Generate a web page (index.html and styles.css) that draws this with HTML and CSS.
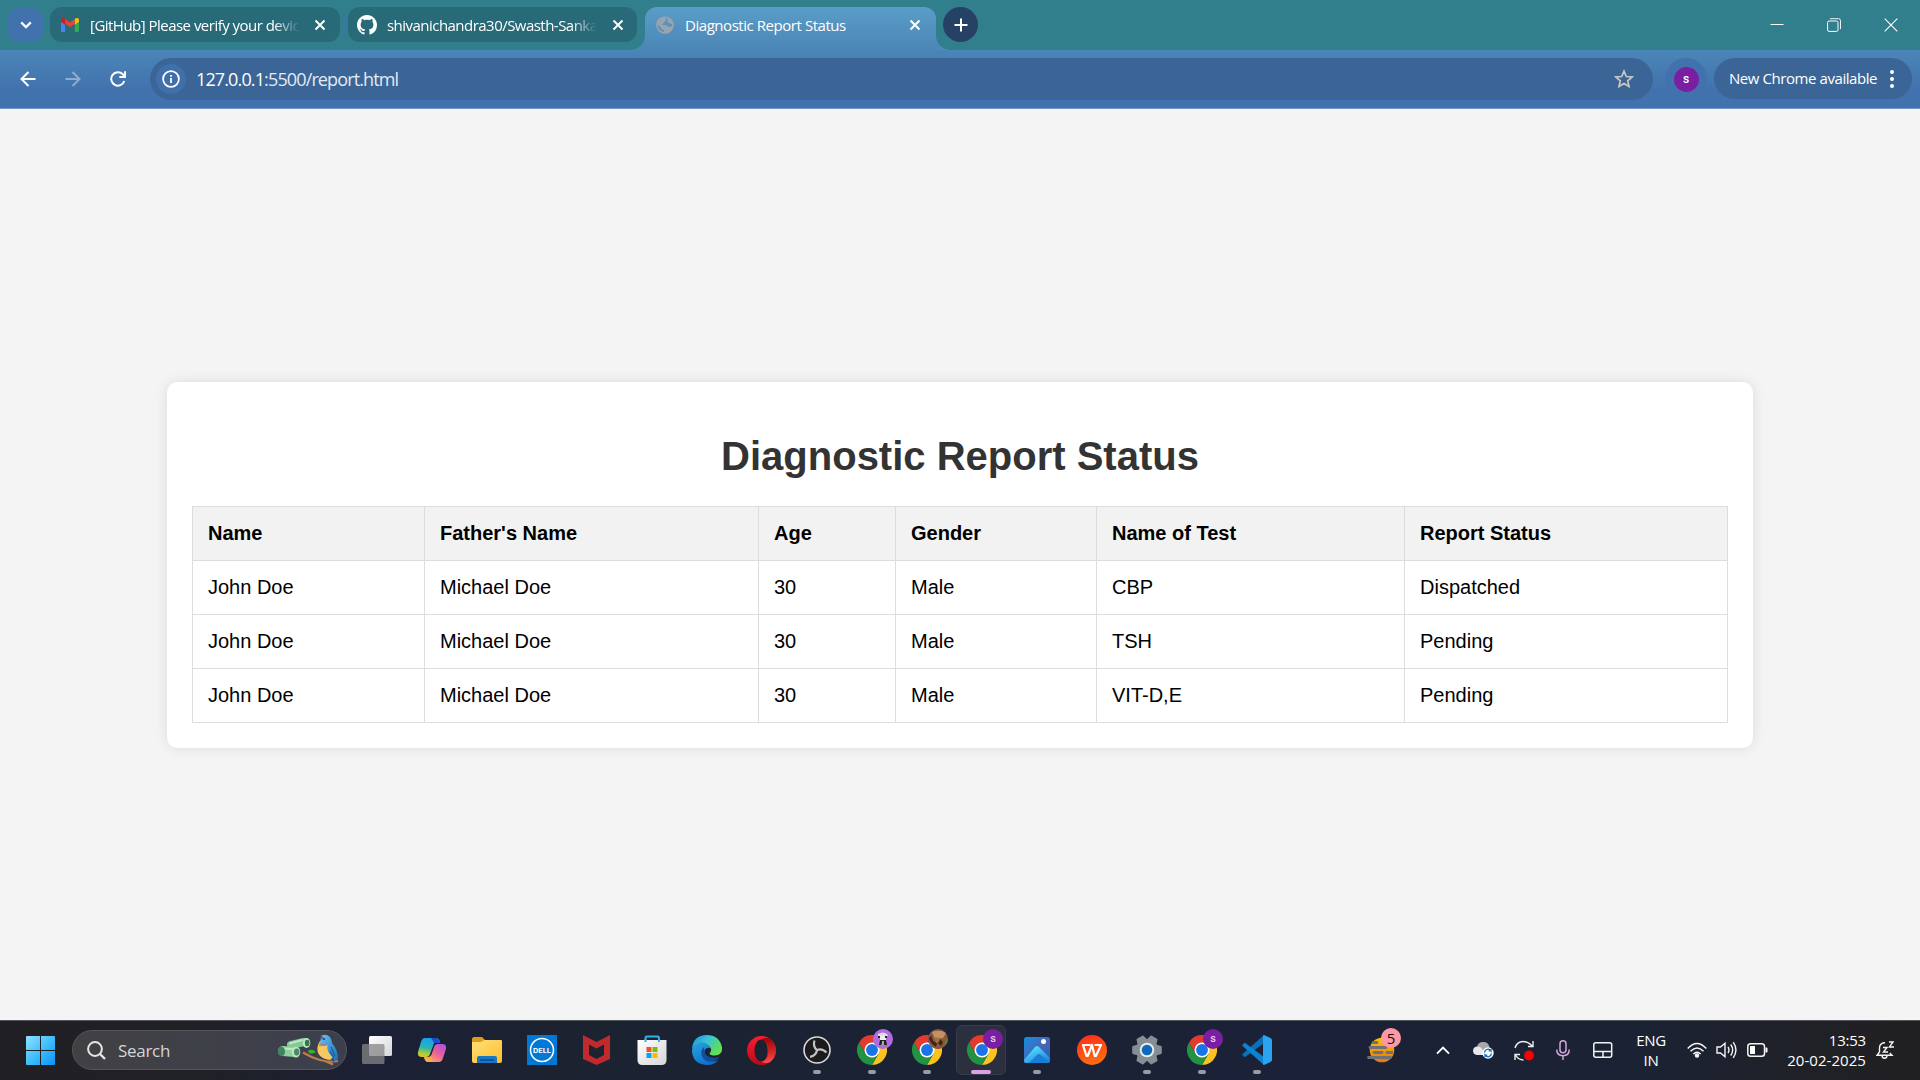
FILE: index.html
```html
<!DOCTYPE html>
<html lang="en">
<head>
<meta charset="utf-8">
<title>Diagnostic Report Status</title>
<link rel="stylesheet" href="styles.css">
</head>
<body>
<svg class="defs" aria-hidden="true">
  <defs>
    <linearGradient id="win" x1="0" y1="0" x2="1" y2="1"><stop offset="0" stop-color="#8fe2ff"/><stop offset=".5" stop-color="#40c0fb"/><stop offset="1" stop-color="#0a93f8"/></linearGradient>
    <linearGradient id="white" x1="0" y1="0" x2="1" y2="1"><stop offset="0" stop-color="#fff"/><stop offset="1" stop-color="#d5d5d8"/></linearGradient>
    <linearGradient id="folder" x1="0" y1="0" x2="1" y2="1"><stop offset="0" stop-color="#ffe07a"/><stop offset="1" stop-color="#fdbf2d"/></linearGradient>
    <linearGradient id="copA" x1="0.2" y1="0" x2="0" y2="1"><stop offset="0" stop-color="#1ba0f0"/><stop offset=".45" stop-color="#28b5b0"/><stop offset=".75" stop-color="#a5cc3e"/><stop offset="1" stop-color="#f0c420"/></linearGradient>
    <linearGradient id="copB" x1="1" y1="0" x2="0.2" y2="1"><stop offset="0" stop-color="#a550ee"/><stop offset=".5" stop-color="#ea5e9a"/><stop offset="1" stop-color="#ffac5e"/></linearGradient>
    <linearGradient id="edgeTop" x1="0" y1="0" x2="1" y2=".5"><stop offset="0" stop-color="#1c8fdc"/><stop offset=".5" stop-color="#36c4d6"/><stop offset="1" stop-color="#62e052"/></linearGradient>
    <linearGradient id="edgeLeft" x1="0" y1="0" x2=".6" y2="1"><stop offset="0" stop-color="#2aa5e0"/><stop offset="1" stop-color="#0b6fd0"/></linearGradient>
    <linearGradient id="opera" x1="0" y1="0" x2="0" y2="1"><stop offset="0" stop-color="#ff1b2d"/><stop offset="1" stop-color="#b80a18"/></linearGradient>
    <linearGradient id="operaR" x1="0" y1="0" x2="0" y2="1"><stop offset="0" stop-color="#9c0000"/><stop offset="1" stop-color="#ff4b4b"/></linearGradient>
    <linearGradient id="photo" x1="0" y1="0" x2="1" y2="1"><stop offset="0" stop-color="#1490df"/><stop offset=".55" stop-color="#4a63b8"/><stop offset="1" stop-color="#0f68b8"/></linearGradient>
    <linearGradient id="hill" x1="0.3" y1="0" x2="1" y2="1"><stop offset="0" stop-color="#58e4fb"/><stop offset="1" stop-color="#1278d8"/></linearGradient>
    <linearGradient id="wps" x1="0" y1="0" x2="0.3" y2="1"><stop offset="0" stop-color="#ff2a1c"/><stop offset="1" stop-color="#ff6a10"/></linearGradient>
    <linearGradient id="sun" x1="0" y1="0" x2="0" y2="1"><stop offset="0" stop-color="#fbc400"/><stop offset="1" stop-color="#e87412"/></linearGradient>
    <linearGradient id="bird" x1="0" y1="0" x2="1" y2="1"><stop offset="0" stop-color="#69bdf0"/><stop offset="1" stop-color="#1c6fb8"/></linearGradient>
    <symbol id="chrome" viewBox="0 0 48 48">
      <path fill="#e33b2e" d="M3.2 12A24 24 0 0 1 44.8 12H24L13.6 30Z"/>
      <path fill="#fcc31e" d="M44.8 12A24 24 0 0 1 24 48L34.4 30 24 12Z"/>
      <path fill="#229342" d="M3.2 12A24 24 0 0 0 24 48L34.4 30H13.6Z"/>
      <circle cx="24" cy="24" r="12" fill="#fff"/><circle cx="24" cy="24" r="9.5" fill="#1a73e8"/>
    </symbol>
    <symbol id="cross" viewBox="0 0 12 12"><path d="M1.5 1.5 10.5 10.5M10.5 1.5 1.5 10.5" stroke="#fff" stroke-width="1.9"/></symbol>
  </defs>
</svg>

<header class="browser">
  <div class="tabstrip">
    <button class="tab-search"><svg width="12" height="8" viewBox="0 0 12 8" fill="none" stroke="#fff" stroke-width="2.2"><path d="M1.2 1.4 6 6.1 10.8 1.4"/></svg></button>
    <div class="tab">
      <svg class="favicon" width="18" height="14" viewBox="0 0 18 14"><path fill="#4285f4" d="M0 2.5 4.1 5.6V14H1.3A1.3 1.3 0 0 1 0 12.7Z"/><path fill="#34a853" d="M18 2.5 13.9 5.6V14h2.8a1.3 1.3 0 0 0 1.3-1.3Z"/><path fill="#ea4335" d="M4.1 5.6V.9L9 4.6 13.9.9v4.7L9 9.3Z"/><path fill="#c5221f" d="M0 3.8V2C0 .2 2-.5 3.3.3l.8.6v5.9Z"/><path fill="#fbbc04" d="M18 3.8V2c0-1.800-2-2.500-3.300-1.700l-.8.6v5.900Z"/></svg>
      <span class="tab-title fade t1">[GitHub] Please verify your devic</span>
      <svg class="close" width="12" height="12"><use href="#cross"/></svg>
    </div>
    <i class="tab-sep"></i>
    <div class="tab second">
      <svg class="favicon" width="20" height="20" viewBox="0 0 16 16"><path fill="#fff" d="M8 0C3.58 0 0 3.58 0 8c0 3.540 2.290 6.530 5.470 7.590.4.070.55-.17.55-.38 0-.19-.01-.82-.01-1.490-2.010.37-2.530-.49-2.690-.94-.09-.23-.48-.94-.82-1.130-.28-.15-.68-.52-.01-.53.63-.01 1.080.58 1.230.82.72 1.210 1.870.87 2.330.66.07-.52.28-.87.51-1.070-1.780-.2-3.640-.89-3.640-3.950 0-.87.31-1.590.82-2.150-.08-.2-.36-1.020.08-2.120 0 0 .67-.21 2.200.82.64-.18 1.320-.27 2-.27s1.360.09 2 .27c1.530-1.040 2.200-.82 2.200-.82.44 1.100.16 1.920.08 2.120.51.56.82 1.270.82 2.150 0 3.070-1.870 3.750-3.650 3.950.29.25.54.73.54 1.480 0 1.070-.01 1.930-.01 2.200 0 .21.15.46.55.38A8.010 8.010 0 0 0 16 8c0-4.420-3.580-8-8-8Z"/></svg>
      <span class="tab-title fade t2">shivanichandra30/Swasth-Sanka</span>
      <svg class="close" width="12" height="12"><use href="#cross"/></svg>
    </div>
    <div class="tab active">
      <svg class="favicon" width="18" height="18" viewBox="0 0 18 18"><circle cx="9" cy="9" r="8" fill="none" stroke="#9ba3ac" stroke-width="1.7"/><path fill="#9ba3ac" d="M1 7.500C2 3 6 .7 10 1.500 9 3 11 3.500 9.500 5 8 5.500 8.500 7 7 7.500L6 9h4c1.500 0 1.500 2 3 2s2.500-1 4-.5C16 14.500 12.500 17.500 8.500 17c-1-1 0-2-1-3-2 0-2-2-3-3Z"/><path fill="#9ba3ac" d="M11 1.500c3 .5 6 3.500 6 7-2 0-2-1.500-4-1.500-1.500 0-2-1-1-2Z"/></svg>
      <span class="tab-title t3">Diagnostic Report Status</span>
      <svg class="close" width="12" height="12"><use href="#cross"/></svg>
    </div>
    <button class="new-tab"><svg width="14" height="14" viewBox="0 0 14 14"><path d="M7 .5v13M.5 7h13" stroke="#fff" stroke-width="2"/></svg></button>
    <div class="window-controls">
      <svg width="14" height="14" viewBox="0 0 14 14"><path d="M.5 6.500h13" stroke="#fff"/></svg>
      <svg width="14" height="14" viewBox="0 0 14 14" fill="none" stroke="#fff"><rect x=".6" y="3" width="10.400" height="10.400" rx="1.500"/><path d="M3 .7h8.500a2 2 0 0 1 2 2v8.500" stroke-opacity=".9"/></svg>
      <svg width="14" height="14" viewBox="0 0 14 14"><path d="M.7.7 13.300 13.300M13.300.7.7 13.300" stroke="#fff" stroke-width="1.100"/></svg>
    </div>
  </div>
  <div class="toolbar">
    <div class="nav">
      <svg width="16" height="16" viewBox="0 0 16 16" fill="none" stroke="#fff" stroke-width="2"><path d="M15.500 8H2M8.500 1 1.500 8l7 7"/></svg>
      <svg width="16" height="16" viewBox="0 0 16 16" fill="none" stroke="#8eabd0" stroke-width="2"><path d="M.5 8H14M7.500 1l7 7-7 7"/></svg>
      <svg width="16" height="16" viewBox="0 0 16 16" fill="none" stroke="#fff" stroke-width="2"><path d="M14.300 10A6.700 6.700 0 1 1 12.800 3.300L14.500 5"/><path d="M15 .3V6H9.300"/></svg>
    </div>
    <div class="omnibox">
      <span class="info"><svg width="18" height="18" viewBox="0 0 18 18"><circle cx="9" cy="9" r="7.900" fill="none" stroke="#fff" stroke-width="1.800"/><path d="M9 8v5M9 5v1.800" stroke="#fff" stroke-width="1.800"/></svg></span>
      <span class="url"><b>127.0.0.1</b>:5500/report.html</span>
      <svg class="star" width="20" height="20" viewBox="0 0 20 20"><path d="m10 2.200 2.300 5.300 5.800.5-4.400 3.800 1.300 5.700-5-3-5 3 1.300-5.700L1.900 8l5.800-.5Z" fill="none" stroke="#c9c6c4" stroke-width="1.700"/></svg>
    </div>
    <div class="profile"><span>s</span></div>
    <div class="update"><span>New Chrome available</span><svg width="4" height="18" viewBox="0 0 4 18" fill="#fff"><circle cx="2" cy="2" r="2"/><circle cx="2" cy="9" r="2"/><circle cx="2" cy="16" r="2"/></svg></div>
  </div>
</header>

<main class="page">
  <section class="card">
    <h1>Diagnostic Report Status</h1>
    <table>
      <colgroup><col class="c-name"><col class="c-father"><col class="c-age"><col class="c-gender"><col class="c-test"><col class="c-status"></colgroup>
      <thead><tr><th>Name</th><th>Father's Name</th><th>Age</th><th>Gender</th><th>Name of Test</th><th>Report Status</th></tr></thead>
      <tbody>
        <tr><td>John Doe</td><td>Michael Doe</td><td>30</td><td>Male</td><td>CBP</td><td>Dispatched</td></tr>
        <tr><td>John Doe</td><td>Michael Doe</td><td>30</td><td>Male</td><td>TSH</td><td>Pending</td></tr>
        <tr><td>John Doe</td><td>Michael Doe</td><td>30</td><td>Male</td><td>VIT-D,E</td><td>Pending</td></tr>
      </tbody>
    </table>
  </section>
</main>

<footer class="taskbar">
  <svg class="start" width="29" height="29" viewBox="0 0 29 29" fill="url(#win)"><path d="M1 0h13v14H0V1a1 1 0 0 1 1-1ZM15 0h13a1 1 0 0 1 1 1v13H15ZM0 15h14v14H1a1 1 0 0 1-1-1ZM15 15h14v13a1 1 0 0 1-1 1H15Z"/></svg>
  <div class="search">
    <svg width="19" height="19" viewBox="0 0 19 19" fill="none" stroke="#e6e6e8" stroke-width="2"><circle cx="8" cy="8" r="6.900"/><path d="m13 13 5 5" stroke-width="2.400"/></svg>
    <span>Search</span>
    <svg class="doodle" width="61" height="32" viewBox="0 0 61 32">
      <path d="M13 11 26 8" stroke="#86c595" stroke-width="8" stroke-linecap="round"/>
      <path d="M5 17 17 18" stroke="#8fd09d" stroke-width="10" stroke-linecap="round"/>
      <path d="M12 9.500 24 6M5 14.500 15 15" stroke="#bdeac4" stroke-width="2" stroke-linecap="round"/>
      <ellipse cx="3.500" cy="17.500" rx="3.500" ry="4.800" fill="#3f8560"/>
      <ellipse cx="18" cy="18" rx="4.300" ry="5.500" fill="#b5e6bc"/><ellipse cx="18.700" cy="18" rx="2.700" ry="3.600" fill="#4c8862"/>
      <ellipse cx="28.500" cy="9" rx="3.800" ry="4.900" fill="#b5e6bc"/><ellipse cx="29.200" cy="9" rx="2.300" ry="3.300" fill="#39734e"/>
      <path d="M25 18.500q8 5 17 7.500t18 1M47 27l8 3.500" stroke="#c07a4a" stroke-width="2.200" fill="none"/>
      <path fill="#38b032" d="M30 17q4-3 8 1-4 2.500-7 1Z"/>
      <path fill="#f6c660" d="M42 7q-4 6-2 12 3 6 12 7l4-3-6-16Z"/>
      <path fill="url(#bird)" d="M43 2q5-3 9 1 2 3 2 6 6 7 6 16l-3 2-6-8q-3-5-1-8-3 2-8 0Z"/>
      <path fill="#c46f38" d="M41 9q4 2 8 1-3 3-8 2Z" opacity=".55"/>
      <path d="m53 13 4 9M52 17l4 7M54 24l2 5" stroke="#1b5f9e" stroke-width="1.300"/>
      <circle cx="46" cy="5" r=".9" fill="#162b45"/><path fill="#55616c" d="m43.500 6-1-6 3 4Z"/>
    </svg>
  </div>
  <nav class="apps">
    <div class="app"><svg width="30" height="28" viewBox="0 0 30 28"><rect x="7" y="0" width="23" height="20" rx="1.500" fill="url(#white)"/><rect x="0" y="8" width="22.500" height="20" rx="1.500" fill="#858585" fill-opacity=".75"/></svg></div>
    <div class="app"><svg width="30" height="28" viewBox="0 0 30 28"><path fill="url(#copA)" d="M8 2h11q3 0 4 4h-4q-2 0-3 4l-3 8q-1 3-4 3H5q-5 0-4-5L4 6q1-4 4-4Z"/><path fill="#1a4fd0" d="M14 2h5q3 0 4 5h-4q-3 0-3-2Z"/><path fill="url(#copB)" d="M21 8h4q5 0 4 5l-3 9q-1 4-4 4H11q-3 0-4-5h4q3 0 4-4l2-6q1-3 4-3Z"/><path fill="#f7b23b" d="M7 21h5q2 0 2-2l1 7h-4q-3 0-4-5Z" opacity=".7"/></svg></div>
    <div class="app"><svg width="30" height="26" viewBox="0 0 30 26"><path fill="#e09b14" d="M1.500 0H10l3 3h-1l-3 4H0V1.500Z"/><path fill="url(#folder)" d="M0 5h9l3-2h17a1 1 0 0 1 1 1v20q0 2-2 2H2q-2 0-2-2Z"/><path fill="#1878c8" d="M7 19h16q2 0 2 2v5H5v-5q0-2 2-2Z"/><path stroke="#0c4a87" stroke-width="1.500" d="M8 23h14"/></svg></div>
    <div class="app"><svg width="30" height="30" viewBox="0 0 30 30"><rect width="30" height="30" fill="#0078d4"/><circle cx="15" cy="15" r="11.500" fill="none" stroke="#fff" stroke-width="1.500"/><text x="15" y="17.500" text-anchor="middle" font-family="Inter, sans-serif" font-weight="700" font-size="6.800" textLength="18" lengthAdjust="spacingAndGlyphs" fill="#fff">DELL</text></svg></div>
    <div class="app"><svg width="27" height="30" viewBox="0 0 27 30"><path fill="#c02a2c" fill-rule="evenodd" d="M0 0 13.500 7 27 0v24l-13.500 6L0 24ZM6 9.500V20l7.500 4 7.500-4V9.500l-7.500 4Z"/></svg></div>
    <div class="app"><svg width="30" height="30" viewBox="0 0 30 30"><path d="M8.500 8V3q0-1.500 1.500-1.500h10.500Q22 1.500 22 3v5" fill="none" stroke="#2fb4e8" stroke-width="2"/><path fill="url(#white)" d="M.5 5H29.500V25q0 5-5 5h-19q-5 0-5-5Z"/><path fill="#2fb4e8" d="M7.500 4h2v3h-2ZM21 4h2v3h-2Z"/><path fill="#f25022" d="M9.500 12h5v5h-5Z"/><path fill="#7fba00" d="M15.500 12h5v5h-5Z"/><path fill="#00a4ef" d="M9.500 18h5v5h-5Z"/><path fill="#ffb900" d="M15.500 18h5v5h-5Z"/></svg></div>
    <div class="app"><svg width="30" height="30" viewBox="0 0 30 30"><path fill="url(#edgeLeft)" d="M0 15Q2 7 10 7q8 0 8.500 6-5-1-6 3.500-1 7 6 9.500 4 1 8-1-4 5-11.500 5Q0 29 0 15Z"/><path fill="#124f9a" d="M12 12Q7 17 11 23q5 7 15 1l1.500-2.500q-2 1.500-6 1.300Q13 22 12.500 16Z"/><path fill="url(#edgeTop)" d="M0 14Q1 0 15 0q12 0 15 12 1 8-7 8.500-5 0-5.500-2 2-2 1.500-4.500Q17.500 8 10 7.500 3 8 0 14Z"/></svg></div>
    <div class="app"><svg width="29" height="29" viewBox="0 0 29 29"><path fill="url(#opera)" fill-rule="evenodd" d="M14.500 0a14.500 14.500 0 1 0 0 29 14.500 14.500 0 1 0 0-29ZM14.500 3.500c4 0 6 4.500 6 11s-2 11-6 11-7-4.500-7-11 3-11 7-11Z"/><path fill="url(#operaR)" d="M14.500 3.500Q19 .5 23.500 3.200A14.500 14.500 0 0 1 23.500 25.800Q19 28.500 14.500 25.500c4-.5 7-4.500 7-11s-3-10.500-7-11Z"/></svg></div>
    <div class="app"><svg width="28" height="28" viewBox="0 0 28 28"><circle cx="14" cy="14" r="13" fill="#1c1b1d" stroke="#d9d9d9" stroke-width="1.600"/><g fill="none" stroke="#c3c3c3" stroke-width="2.200"><path d="M14 14Q9.500 10.500 11.500 4.500"/><path d="M14 14Q9.500 10.500 11.500 4.500" transform="rotate(120 14 14)"/><path d="M14 14Q9.500 10.500 11.500 4.500" transform="rotate(240 14 14)"/></g></svg><i class="dot"></i></div>
    <div class="app"><svg width="30" height="30"><use href="#chrome"/></svg><span class="badge cat"><svg width="20" height="20" viewBox="0 0 20 20"><path fill="#ddd" d="M5 5q5-3 9 0l1 2H5Z"/><path fill="#eee" d="M7 7h6v4H7Z"/><path fill="#222" d="M5 7h2v2H5ZM12 7h2v2h-2ZM7 11h6l1 5h-3l-1-4-2 4H6Z"/><path fill="#aaa" d="M9 12h2v4H9Z"/></svg></span><i class="dot"></i></div>
    <div class="app"><svg width="30" height="30"><use href="#chrome"/></svg><span class="badge dog"><svg width="20" height="20" viewBox="0 0 20 20"><circle cx="10" cy="10" r="10" fill="#8a5a34"/><path fill="#c29264" d="M4 3q8-3 14 1l-3 5-8 1Z"/><path fill="#3c2519" d="M3 6l2 6 4 2-1 4-4-3-3-5ZM12 10l3 3-2 4-3-3Z"/><path fill="#5c8a3a" d="M17 14l2-5 1 3-2 4Z"/><path fill="#a96e3c" d="M6 8l6 1-1 4-3 1Z"/></svg></span><i class="dot"></i></div>
    <div class="app current"><svg width="30" height="30"><use href="#chrome"/></svg><span class="badge">s</span><i class="dot"></i></div>
    <div class="app"><svg width="26" height="26" viewBox="0 0 26 26"><rect width="26" height="26" rx="2.500" fill="url(#photo)"/><path fill="url(#hill)" d="M0 23 11 10q2-2 4 0l11 11v2.500q0 2.500-2.500 2.500h-21Q0 26 0 23.500Z"/><path fill="#197fd6" d="m5 26 8-8q2-2 4 0l8 7q-1 1-2 1Z"/><circle cx="19.500" cy="4.500" r="2.500" fill="#fff"/></svg><i class="dot"></i></div>
    <div class="app"><svg width="30" height="30" viewBox="0 0 30 30"><circle cx="15" cy="15" r="15" fill="url(#wps)"/><path d="M13.500 10H6l3.500 11h1.200L15 10l2.700 11h1.200L24 10h-6.500" fill="none" stroke="#fff" stroke-width="2.200" stroke-linejoin="round"/></svg></div>
    <div class="app"><svg width="30" height="30" viewBox="0 0 30 30"><g fill="#868e95" stroke="#868e95" stroke-width="2" stroke-linejoin="round"><circle cx="15" cy="15" r="10"/><path d="M1.200 12 6 10.500h18l4.800 1.500v6L24 19.500H6L1.200 18Z"/><path d="M1.200 12 6 10.500h18l4.800 1.500v6L24 19.500H6L1.200 18Z" transform="rotate(60 15 15)"/><path d="M1.200 12 6 10.500h18l4.800 1.500v6L24 19.500H6L1.200 18Z" transform="rotate(120 15 15)"/></g><circle cx="15" cy="15" r="7.300" fill="#e6ebee"/><circle cx="15" cy="15" r="5.300" fill="#1268b8"/></svg><i class="dot"></i></div>
    <div class="app"><svg width="30" height="30"><use href="#chrome"/></svg><span class="badge">s</span><i class="dot"></i></div>
    <div class="app"><svg width="30" height="30" viewBox="0 0 30 30"><path fill="#0a6fba" d="m0 19.500 2 2.200q.8.700 1.600 0L22 8V0Z"/><path fill="#0c83d2" d="m0 10.500 2-2.200q.8-.7 1.600 0L22 22v8Z"/><path fill="#2aa4f0" d="M22 0l6.500 3q1.500.8 1.500 2v20q0 1.200-1.500 2L22 30q-1 0-1-1V1q0-1 1-1Z"/></svg><i class="dot"></i></div>
  </nav>
  <div class="tray">
    <div class="weather"><svg width="28" height="26" viewBox="0 0 28 26"><circle cx="15" cy="13" r="12.300" fill="url(#sun)"/><path stroke="#6e7178" stroke-width="2.800" stroke-linecap="round" d="M6 5.500h4M3 10.500h16M7 15.500h8M20 15.500h5M1.500 20.500h22"/></svg><span class="count">5</span></div>
    <svg class="up" width="14" height="9" viewBox="0 0 14 9" fill="none" stroke="#fff" stroke-width="1.900"><path d="M1 7.700 7 1.500l6 6.200"/></svg>
    <svg class="cloud" width="21" height="18" viewBox="0 0 21 18"><path fill="#a8a8aa" d="M4 6q1-5 6-5 5-.5 6.500 5v6H9Z"/><path fill="#e8e8ea" d="M4 14q-4-.5-4-4.500Q.5 5.500 4.500 5.500 8 5.500 9 8l4 6Z"/><circle cx="15" cy="12" r="5.700" fill="#fff"/><path d="M11.500 11.500a3.600 3.600 0 0 1 6.500-1.700V8M18.500 12.500a3.600 3.600 0 0 1-6.500 1.700V16M15.700 9.800H18M14.300 14.200H12" fill="none" stroke="#1673c5" stroke-width="1.400"/></svg>
    <svg class="sync" width="20" height="21" viewBox="0 0 20 21"><path d="M1 8Q3 1.500 9 1.500q5 0 9 4.500M19 1v5.500h-5M1 20v-5.500h5M1.500 15q3 5 8 5" fill="none" stroke="#eee" stroke-width="1.400"/><circle cx="15" cy="15.500" r="4.900" fill="#f00"/></svg>
    <svg class="mic" width="14" height="20" viewBox="0 0 14 20" fill="none" stroke="#d3a5de" stroke-width="1.500"><rect x="4" y=".8" width="6" height="12" rx="3"/><path d="M.8 9.500q0 6.200 6.200 6.200t6.200-6.200M7 16v4"/></svg>
    <svg class="pad" width="20" height="16" viewBox="0 0 20 16" fill="none" stroke="#f3f3f3" stroke-width="1.500"><rect x=".8" y=".8" width="17.900" height="14.400" rx="2"/><path d="M1 9.500h18M10 9.500V15"/></svg>
    <div class="lang"><span>ENG</span><span>IN</span></div>
    <svg class="wifi" width="20" height="16" viewBox="0 0 20 16" fill="none" stroke="#f4f4f4" stroke-width="1.500"><path d="M.7 6.500Q10-3.500 19.300 6.500M3.500 9.200q6.500-6.600 13 0M6.300 12q3.700-3.600 7.400 0"/><circle cx="10" cy="13.600" r="1.500" fill="#fff"/></svg>
    <svg class="vol" width="21" height="18" viewBox="0 0 21 18" fill="none" stroke="#f4f4f4" stroke-width="1.400"><path d="M1 6v6h3.500L9 15.800V2.200L4.500 6ZM12 6q2 3 0 6M14.700 3.500q4 5.500 0 11M17.200 1.200q5.500 7.800 0 15.600"/></svg>
    <svg class="bat" width="21" height="14" viewBox="0 0 21 14"><rect x=".8" y=".8" width="16.700" height="12.400" rx="2.800" fill="none" stroke="#f4f4f4" stroke-width="1.500"/><path fill="#fff" d="M3 3h5v8H3ZM18.500 4.500h1q1 0 1 1v3q0 1-1 1h-1Z"/></svg>
    <div class="clock"><span>13:53</span><span class="date">20-02-2025</span></div>
    <svg class="bell" width="18" height="18" viewBox="0 0 18 18" fill="none" stroke="#f4f4f4" stroke-width="1.400"><path d="M9 1.700H8q-4.500.8-4.500 5.300V11L1 14.300h15L13.800 12M6 14.500q0 2.700 2.500 2.700t2.500-2.700M7 6.500h4L7.500 11H12M13 1h4l-3.500 5H18"/></svg>
  </div>
</footer>
</body>
</html>
```
FILE: styles.css
```css
* { box-sizing: border-box; }
body {
  margin: 0;
  width: 1920px;
  height: 1080px;
  display: flex;
  flex-direction: column;
  overflow: hidden;
  font-family: "Liberation Sans", Arial, sans-serif;
  background: #f4f4f4;
}
.defs { position: absolute; width: 0; height: 0; }
svg { display: block; flex: none; }
button { border: 0; padding: 0; background: none; }

/* Browser frame */
.browser {
  height: 109px;
  flex: none;
  color: #fff;
  font-family: "Open Sans", "Noto Sans", sans-serif;
}
.tabstrip {
  height: 50px;
  display: flex;
  padding: 7px 22px 0 8px;
  background: #317e8d;
}
.tab-search {
  width: 35px;
  height: 34px;
  margin: 1px 7px 0 0;
  display: grid;
  place-items: center;
  border-radius: 12px;
  background: #4272ae;
}
.tab {
  width: 290px;
  height: 35px;
  display: flex;
  align-items: center;
  padding: 0 14px 0 11px;
  border-radius: 12px;
  background: #286a77;
}
.tab.second { width: 289px; padding: 0 13px 0 9px; }
.tab-title {
  flex: 1;
  font-size: 15px;
  line-height: 20px;
  white-space: nowrap;
}
.fade { -webkit-mask-image: linear-gradient(90deg, #000 calc(100% - 26px), transparent); mask-image: linear-gradient(90deg, #000 calc(100% - 26px), transparent); }
.t1 { width: 210px; flex: none; margin: 0 auto 0 11px; letter-spacing: -.52px; }
.t2 { width: 210px; flex: none; margin: 0 auto 0 10px; letter-spacing: -.53px; }
.t3 { margin: 0 14px 0 11px; letter-spacing: -.45px; }
.tab-sep { width: 2px; height: 20px; margin: 8px 3px 0 3px; background: #4272ae; border-radius: 1px; }
.tab.active {
  position: relative;
  height: 43px;
  width: 291px;
  margin-left: 8px;
  padding: 0 15px 8px 11px;
  border-radius: 12px 12px 0 0;
  background: linear-gradient(#5a9dc7, #4b86b7);
}
.tab.active::before,
.tab.active::after {
  content: "";
  position: absolute;
  bottom: 0;
  width: 14px;
  height: 14px;
}
.tab.active::before { left: -14px; background: radial-gradient(circle at 0 0, transparent 13.5px, #4c89b9 14px); }
.tab.active::after { right: -14px; background: radial-gradient(circle at 100% 0, transparent 13.5px, #4c89b9 14px); }
.new-tab {
  width: 35px;
  height: 35px;
  margin-left: 7px;
  display: grid;
  place-items: center;
  border-radius: 50%;
  background: #264164;
}
.window-controls { display: flex; gap: 43px; margin: 11px 0 0 auto; }
.toolbar {
  height: 59px;
  display: flex;
  align-items: flex-start;
  padding: 8px 8px 0 20px;
  background: linear-gradient(#4b86b7, #4272ae 40px);
  border-bottom: 1px solid #6f97c6;
}
.nav { display: flex; gap: 29px; margin: 13px 24px 0 0; }
.omnibox {
  width: 1503px;
  height: 42px;
  display: flex;
  align-items: center;
  padding: 0 19px 0 6px;
  border-radius: 21px;
  background: #3b6596;
}
.info { width: 30px; height: 30px; display: grid; place-items: center; border-radius: 50%; background: #4070ac; }
.url { margin: 0 auto 1px 10px; font-size: 18px; line-height: 24px; letter-spacing: -.87px; color: #e3eaf3; }
.url b { font-weight: 400; color: #fff; }
.profile {
  width: 42px;
  height: 42px;
  margin: 0 7px 0 12px;
  display: grid;
  place-items: center;
  border-radius: 50%;
  background: #4272ae;
}
.profile span {
  width: 25px;
  height: 25px;
  border-radius: 50%;
  background: #7b1fa2;
  font: 500 12px/24px Roboto, sans-serif;
  text-align: center;
}
.update {
  width: 198px;
  height: 41px;
  display: flex;
  align-items: center;
  justify-content: space-between;
  padding: 0 18px 0 15px;
  border-radius: 21px;
  background: #3b6596;
  font-size: 15px;
  letter-spacing: -.43px;
  white-space: nowrap;
}
.update span { margin-bottom: 2px; }

/* Report page */
.page { flex: 1; display: flex; justify-content: center; align-items: center; }
.card {
  width: 1586px;
  height: 366px;
  padding: 25px;
  border-radius: 10px;
  background: #fff;
  box-shadow: 0 0 12.5px rgba(0, 0, 0, .1);
}
h1 {
  margin: 27px 0;
  font-size: 40px;
  line-height: 45px;
  text-align: center;
  color: #333;
}
.card table { width: 1536px; border-collapse: collapse; table-layout: fixed; font-size: 20px; }
.c-name { width: 232px; }
.c-father { width: 334px; }
.c-age { width: 137px; }
.c-gender { width: 201px; }
.c-test { width: 308px; }
th, td { height: 54px; padding: 0 15px; border: 1px solid #ddd; text-align: left; }
th { background: #f2f2f2; }

/* Taskbar */
.taskbar {
  height: 60px;
  flex: none;
  display: flex;
  align-items: center;
  padding: 0 0 1px 26px;
  border-top: 1px solid #54555a;
  background: linear-gradient(90deg, #202024 0, #202126 200px, #1b2035 380px, #1c2230 550px, #1b2233 800px, #1b2238 1300px, #1b2233 1640px, #202125 1840px, #202023);
  color: #fff;
  font-family: "Open Sans", "Noto Sans", sans-serif;
}
.start { margin-right: 17px; }
.search {
  width: 275px;
  height: 40px;
  margin-right: 2px;
  display: flex;
  align-items: center;
  padding: 0 7px 0 14px;
  border: 1px solid #54555b;
  border-radius: 20px;
  background: linear-gradient(90deg, #414144, #3c3f4d);
  color: #d5d5d7;
  font-size: 17px;
  letter-spacing: -.3px;
}
.search span { margin-left: 12px; }
.doodle { margin-left: auto; }
.apps { display: flex; }
.app {
  position: relative;
  width: 55px;
  height: 50px;
  display: grid;
  place-items: center;
}
.app.current::before {
  content: "";
  position: absolute;
  inset: 0 3px 0 2px;
  border: 1px solid #373c4b;
  border-radius: 6px;
  background: #2b2f3e;
}
.app > svg { position: relative; }
.dot { position: absolute; bottom: 1px; left: 24px; width: 8px; height: 4px; border-radius: 2px; background: #9a9ba3; }
.current .dot { left: 17px; width: 20px; background: #dda0e3; }
.badge {
  position: absolute;
  left: 29px;
  top: 4px;
  width: 20px;
  height: 20px;
  border-radius: 50%;
  overflow: hidden;
  background: #7b1fa2;
  color: #e3cdec;
  font: 500 11px/19px Roboto, sans-serif;
  text-align: center;
}
.badge.cat { background: #b26be0; }
.tray { flex: 1; display: flex; align-items: center; padding-left: 83px; }
.weather { position: relative; }
.count {
  position: absolute;
  left: 14px;
  top: -9px;
  width: 20px;
  height: 20px;
  border-radius: 50%;
  background: #ff98a5;
  color: #111;
  font-size: 15px;
  line-height: 20px;
  text-align: center;
}
.up { margin-left: 41px; }
.cloud { margin-left: 23px; }
.sync { margin-left: 20px; }
.mic { margin-left: 22px; }
.pad { margin-left: 23px; }
.lang, .clock { display: flex; flex-direction: column; margin-bottom: 1px; font-size: 15px; line-height: 20px; }
.lang { width: 32px; margin-left: 22px; align-items: center; letter-spacing: -.3px; }
.wifi { margin-left: 20px; }
.vol { margin-left: 9px; }
.bat { margin-left: 10px; }
.clock { width: 84px; margin-left: 14px; align-items: flex-end; letter-spacing: -.2px; }
.date { letter-spacing: .05px; }
.bell { margin-left: 10px; }
```
